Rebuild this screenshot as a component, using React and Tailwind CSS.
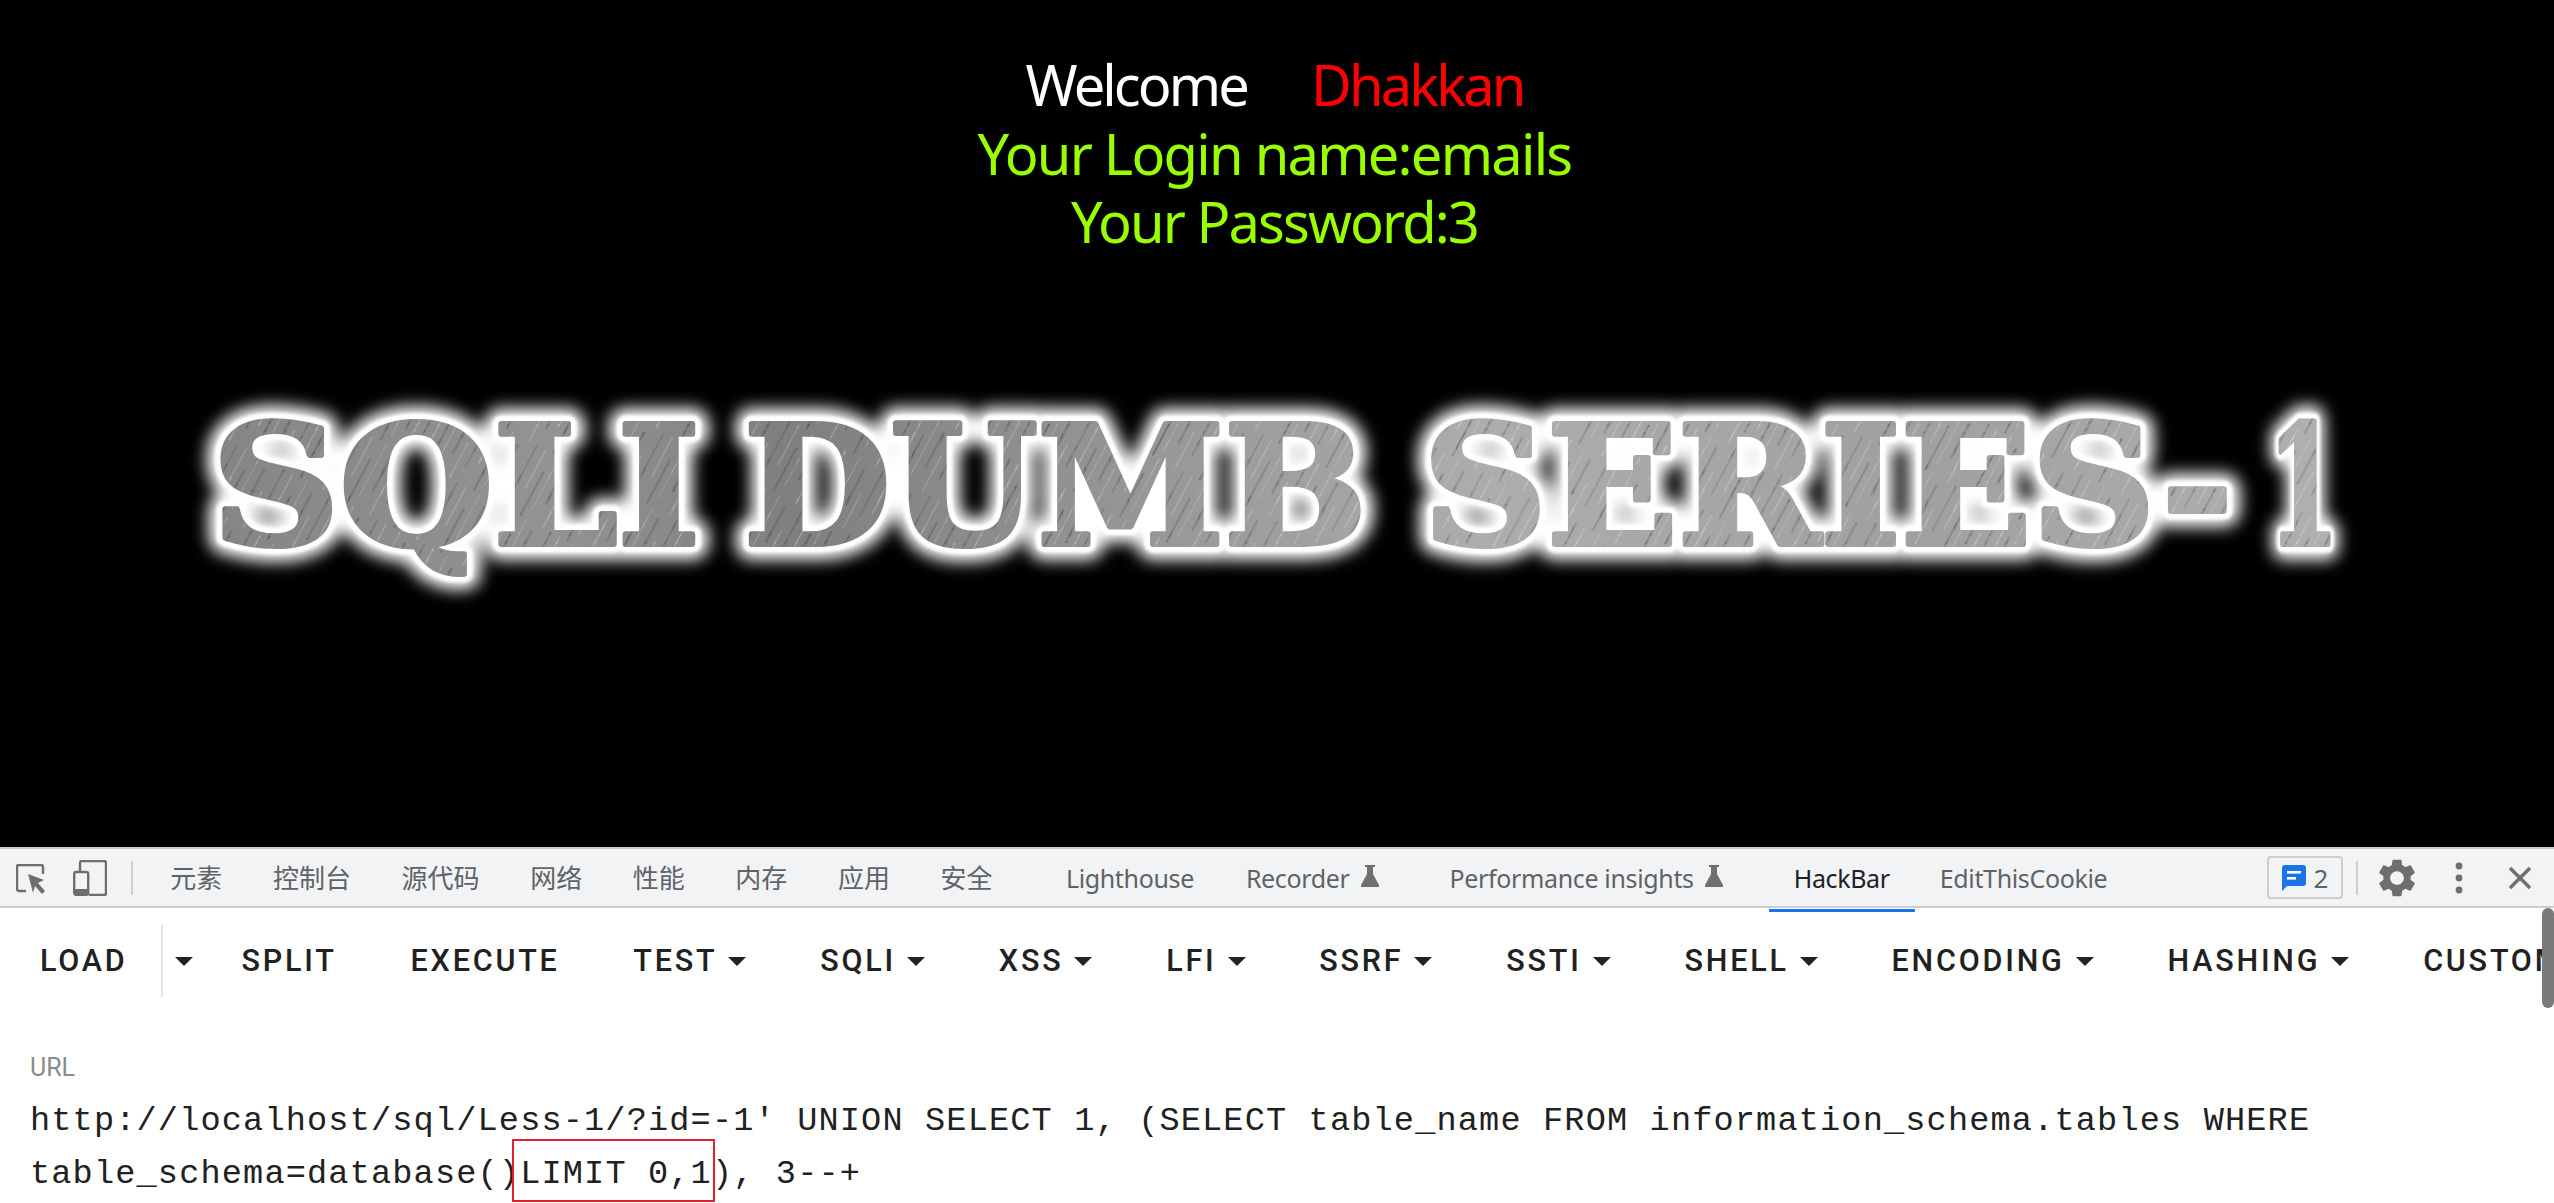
import React from "react";

const cnTabs = ["元素", "控制台", "源代码", "网络", "性能", "内存", "应用", "安全"];
const tools = [
  { label: "SPLIT" },
  { label: "EXECUTE" },
  { label: "TEST", menu: true },
  { label: "SQLI", menu: true },
  { label: "XSS", menu: true },
  { label: "LFI", menu: true },
  { label: "SSRF", menu: true },
  { label: "SSTI", menu: true },
  { label: "SHELL", menu: true },
  { label: "ENCODING", menu: true },
  { label: "HASHING", menu: true },
  { label: "CUSTOM", menu: true },
];

const Caret = () => <span className="ml-[11px] w-0 h-0 shrink-0 border-x-[9px] border-x-transparent border-t-[9px] border-t-[#222]" />;

const Flask = () => (
  <svg width="20" height="24" viewBox="0 0 20 24" className="ml-[10px] -mt-[6px]">
    <path d="M5 1h10v2h-2v7l6 11v2H1v-2l6-11V3H5z" fill="#6f6f6f" />
  </svg>
);

const Word = ({ x, w, children, ...rest }) => (
  <text x={x} y="543" textLength={w} lengthAdjust="spacingAndGlyphs" fontFamily="'DejaVu Serif', serif" fontWeight="700" fontSize="165" {...rest}>
    {children}
  </text>
);

const words = [
  { x: 212, w: 488, t: "SQLI" },
  { x: 744, w: 623, t: "DUMB" },
  { x: 1423, w: 810, t: "SERIES-" },
  { x: 2268, w: 71, t: "1" },
];

// logo text stacked: blurred halo, white rim, grey tone, then brushed streaks
const Logo = () => (
  <svg width="2300" height="240" viewBox="150 370 2300 240" className="mt-[115px] self-start ml-[150px]">
    <defs>
      <filter id="glow" filterUnits="userSpaceOnUse" x="150" y="370" width="2300" height="240">
        <feGaussianBlur stdDeviation="8" />
      </filter>
      <filter id="rim" filterUnits="userSpaceOnUse" x="150" y="370" width="2300" height="240">
        <feGaussianBlur stdDeviation="1.5" />
      </filter>
      <linearGradient id="tone" x1="212" y1="0" x2="2339" y2="0" gradientUnits="userSpaceOnUse">
        <stop offset="0" stopColor="#858585" />
        <stop offset="0.16" stopColor="#939393" />
        <stop offset="0.27" stopColor="#7f7f7f" />
        <stop offset="0.42" stopColor="#949494" />
        <stop offset="0.6" stopColor="#adadad" />
        <stop offset="0.8" stopColor="#a0a0a0" />
        <stop offset="1" stopColor="#b0b0b0" />
      </linearGradient>
      <pattern id="brush" width="53" height="70" patternUnits="userSpaceOnUse" patternTransform="rotate(28)">
        <rect x="3" y="0" width="1.2" height="44" fill="#ffffff" fillOpacity="0.22" />
        <rect x="11" y="20" width="2" height="50" fill="#000000" fillOpacity="0.14" />
        <rect x="19" y="0" width="1" height="60" fill="#ffffff" fillOpacity="0.16" />
        <rect x="28" y="8" width="2.4" height="40" fill="#000000" fillOpacity="0.12" />
        <rect x="37" y="30" width="1.2" height="40" fill="#ffffff" fillOpacity="0.2" />
        <rect x="46" y="0" width="1.6" height="52" fill="#000000" fillOpacity="0.13" />
      </pattern>
    </defs>
    {words.map((w) => (
      <Word key={w.t + "g"} x={w.x} w={w.w} fill="#fff" stroke="#fff" strokeWidth="32" strokeLinejoin="round" filter="url(#glow)">
        {w.t}
      </Word>
    ))}
    {words.map((w) => (
      <Word key={w.t + "r"} x={w.x} w={w.w} fill="#fff" stroke="#fff" strokeWidth="17" strokeLinejoin="round" filter="url(#rim)">
        {w.t}
      </Word>
    ))}
    {words.map((w) => (
      <Word key={w.t + "f"} x={w.x} w={w.w} fill="url(#tone)" stroke="url(#tone)" strokeWidth="6" strokeLinejoin="round">
        {w.t}
      </Word>
    ))}
    {words.map((w) => (
      <Word key={w.t + "b"} x={w.x} w={w.w} fill="url(#brush)" stroke="url(#brush)" strokeWidth="6" strokeLinejoin="round">
        {w.t}
      </Word>
    ))}
  </svg>
);

const App = () => {
  return (
    <div className="h-[1203px] w-[2554px] overflow-hidden bg-white flex flex-col">
      <div className="h-[847px] bg-black flex flex-col items-center pt-[50px] pr-[5px] font-['Noto_Sans',sans-serif] text-[56px] leading-[68.5px]">
        <div className="flex gap-[64px] tracking-[-2.9px]">
          <span className="text-white">Welcome</span>
          <span className="text-[#ff0000]">Dhakkan</span>
        </div>
        <div className="text-[#99ff00] tracking-[-1.75px]">Your Login name:emails</div>
        <div className="text-[#99ff00] tracking-[-1.9px]">Your Password:3</div>
        <Logo />
      </div>

      <div className="h-[61px] shrink-0 bg-[#f1f3f4] border-y-2 border-[#cbcdd1] flex items-center text-[26px] text-[#5f6368] font-['Noto_Sans','Noto_Sans_CJK_SC',sans-serif] relative">
        <svg width="30" height="30" viewBox="0 0 30 30" className="ml-[16px] mt-[2px]">
          <path d="M10 27H3a2 2 0 0 1-2-2V3a2 2 0 0 1 2-2h22a2 2 0 0 1 2 2v7" fill="none" stroke="#6e6e6e" strokeWidth="2.4" />
          <path d="M12 10l16 6-6 3 7 8-3 3-7-8-2 7z" fill="#6e6e6e" />
        </svg>
        <svg width="34" height="36" viewBox="0 0 34 36" className="ml-[27px]">
          <path d="M7 11V3a2 2 0 0 1 2-2h22a2 2 0 0 1 2 2v30a2 2 0 0 1-2 2H16" fill="none" stroke="#6e6e6e" strokeWidth="2.4" />
          <rect x="1.2" y="12" width="14" height="22.8" rx="2" fill="none" stroke="#6e6e6e" strokeWidth="2.4" />
          <rect x="1.2" y="29" width="14" height="6" fill="#6e6e6e" />
        </svg>
        <div className="w-[2px] h-[34px] bg-[#cdcfd3] ml-[24px]" />
        <div className="flex items-center ml-[12px] pt-[2px]">
          {cnTabs.map((t) => (
            <span key={t} className="px-[25.3px]">{t}</span>
          ))}
        </div>
        <div className="flex items-center ml-[22px] pt-[2px] text-[25px] tracking-[-0.35px]">
          <span className="px-[26px]">Lighthouse</span>
          <span className="pl-[26px] flex items-center">Recorder<Flask /></span>
          <span className="pl-[70px]">Performance insights</span>
          <Flask />
          <span className="relative ml-[45px] px-[25px] text-[#202124]">
            HackBar
            <span className="absolute left-0 right-0 -bottom-[15px] h-[3px] bg-[#1a73e8]" />
          </span>
          <span className="px-[25px]">EditThisCookie</span>
        </div>
        <div className="ml-auto flex items-center">
          <div className="w-[76px] h-[43px] border-2 border-[#cbcdd1] rounded-[4px] flex items-center justify-center gap-[8px]">
            <svg width="24" height="26" viewBox="0 0 24 26">
              <path d="M3 0h18a3 3 0 0 1 3 3v15a3 3 0 0 1-3 3H5l-5 5V3a3 3 0 0 1 3-3z" fill="#1a73e8" />
              <rect x="5" y="6" width="14" height="2.6" fill="#fff" />
              <rect x="5" y="12" width="9" height="2.6" fill="#fff" />
            </svg>
            <span className="text-[26px] leading-none">2</span>
          </div>
          <div className="w-[2px] h-[34px] bg-[#cdcfd3] ml-[13px]" />
          <svg width="38" height="38" viewBox="2 2 20 20" className="ml-[20px]">
            <path fill="#6e6e6e" d="M19.14 12.94c.04-.3.06-.61.06-.94 0-.32-.02-.64-.07-.94l2.03-1.58a.49.49 0 0 0 .12-.61l-1.92-3.32a.488.488 0 0 0-.59-.22l-2.39.96c-.5-.38-1.03-.7-1.62-.94l-.36-2.54a.484.484 0 0 0-.48-.41h-3.84c-.24 0-.43.17-.47.41l-.36 2.54c-.59.24-1.13.57-1.62.94l-2.39-.96c-.22-.08-.47 0-.59.22L2.74 8.87c-.12.21-.08.47.12.61l2.03 1.58c-.05.3-.09.63-.09.94s.02.64.07.94l-2.03 1.58a.49.49 0 0 0-.12.61l1.92 3.32c.12.22.37.29.59.22l2.39-.96c.5.38 1.03.7 1.62.94l.36 2.54c.05.24.24.41.48.41h3.84c.24 0 .44-.17.47-.41l.36-2.54c.59-.24 1.13-.56 1.62-.94l2.39.96c.22.08.47 0 .59-.22l1.92-3.32c.12-.22.07-.47-.12-.61l-2.01-1.58zM12 15.6c-1.98 0-3.6-1.62-3.6-3.6s1.62-3.6 3.6-3.6 3.6 1.62 3.6 3.6-1.62 3.6-3.6 3.6z" />
          </svg>
          <svg width="12" height="34" viewBox="0 0 12 34" className="ml-[37px]">
            <circle cx="6" cy="5" r="3.4" fill="#6e6e6e" />
            <circle cx="6" cy="17" r="3.4" fill="#6e6e6e" />
            <circle cx="6" cy="29" r="3.4" fill="#6e6e6e" />
          </svg>
          <svg width="24" height="24" viewBox="0 0 24 24" className="ml-[43px] mr-[22px]">
            <path d="M2 2l20 20M22 2L2 22" stroke="#6e6e6e" strokeWidth="3.4" />
          </svg>
        </div>
      </div>

      <div className="relative flex-1 overflow-hidden">
        <div className="h-[106px] flex items-center whitespace-nowrap font-['Roboto',sans-serif] font-medium text-[30.5px] tracking-[2.8px] text-[#212121]">
          <span className="shrink-0 pl-[40px] pr-[33px]">LOAD</span>
          <span className="shrink-0 w-[2px] h-[72px] bg-[#e4e4e4]" />
          <span className="shrink-0 flex items-center ml-[1px] pr-[13px]"><Caret /></span>
          <div className="flex items-center shrink-0">
            {tools.map((tool) => (
              <span key={tool.label} className="shrink-0 flex items-center ml-[36px] mr-[37.8px]">
                {tool.label}
                {tool.menu && <Caret />}
              </span>
            ))}
          </div>
        </div>

        <div className="pl-[30px] mt-[39px] font-['Roboto',sans-serif] text-[25px] leading-[30px] text-[#8a8a8a]">URL</div>
        <div className="pl-[30px] mt-[12px] font-['Liberation_Mono',monospace] text-[33.6px] leading-[53px] tracking-[1.16px] text-[#212121] whitespace-pre">
          <div>http://localhost/sql/Less-1/?id=-1' UNION SELECT 1, (SELECT table_name FROM information_schema.tables WHERE</div>
          <div>
            table_schema=database()
            <span className="relative">
              LIMIT 0,1
              <span className="absolute -left-[8px] -right-[3px] -top-[16px] -bottom-[9px] border-2 border-[#e8202a]" />
            </span>
            ), 3--+
          </div>
        </div>

        <div className="absolute right-0 top-0 w-[12px] h-[100px] rounded-[6px] bg-[#7a7a7a]" />
      </div>
    </div>
  );
};

export default App;
